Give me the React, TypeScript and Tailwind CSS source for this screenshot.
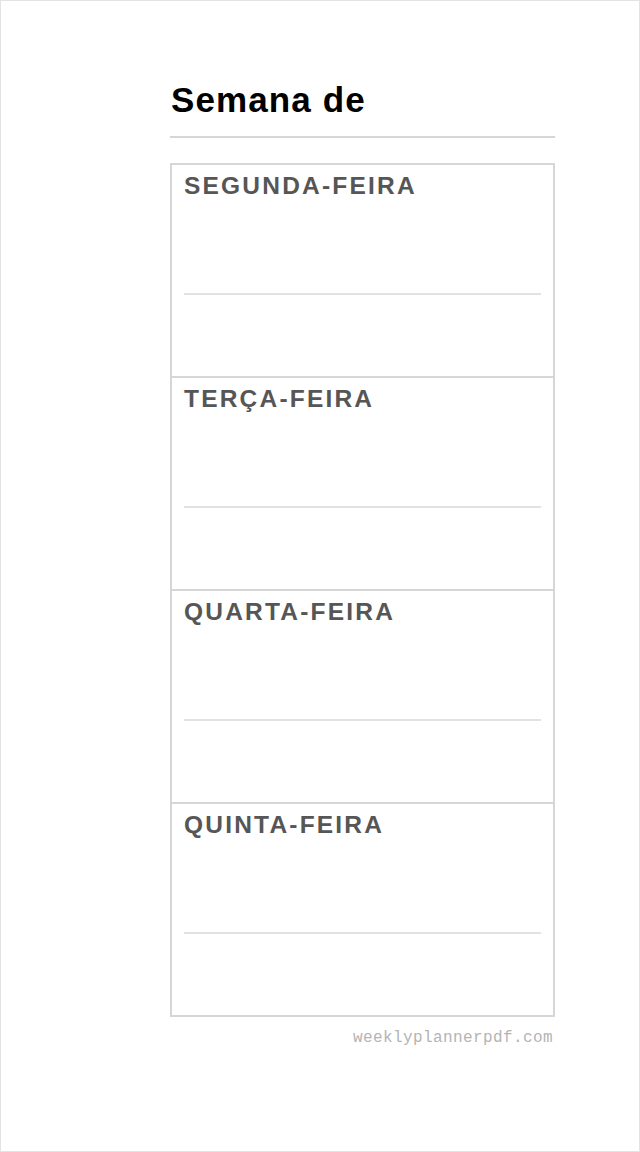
const days = ['SEGUNDA-FEIRA', 'TERÇA-FEIRA', 'QUARTA-FEIRA', 'QUINTA-FEIRA'];

const App = () => {
  return (
    <div className="flex h-[1152px] w-[640px] border border-[#e3e3e3] bg-white font-['Liberation_Sans',sans-serif]">
      <div className="mt-[76px] ml-[169px] flex w-[385px] flex-col">
        <h1 className="pl-[1px] text-[35px] leading-[46px] font-bold tracking-[1.1px] text-black">Semana de</h1>
        <div className="mt-[13px] h-[2px] bg-[#d6d6d6]" />
        <div className="mt-[25px] flex flex-col border-2 border-[#d6d6d6]">
          {days.map((day, i) => (
            <section
              key={day}
              className={`flex h-[211px] box-content flex-col px-[12px] ${i > 0 ? 'border-t-2 border-[#d6d6d6]' : ''}`}
            >
              <h2 className="pt-[6px] text-[24.5px] leading-[30px] font-bold tracking-[2.2px] text-[#565656]">{day}</h2>
              <div className="mt-[92px] h-[2px] bg-[#e2e2e2]" />
            </section>
          ))}
        </div>
        <p className="mt-[11px] pr-[2px] text-right font-['Liberation_Mono',monospace] text-[16px] leading-[20px] tracking-[0.4px] text-[#b4b4b4]">
          weeklyplannerpdf.com
        </p>
      </div>
    </div>
  );
};

export default App;
